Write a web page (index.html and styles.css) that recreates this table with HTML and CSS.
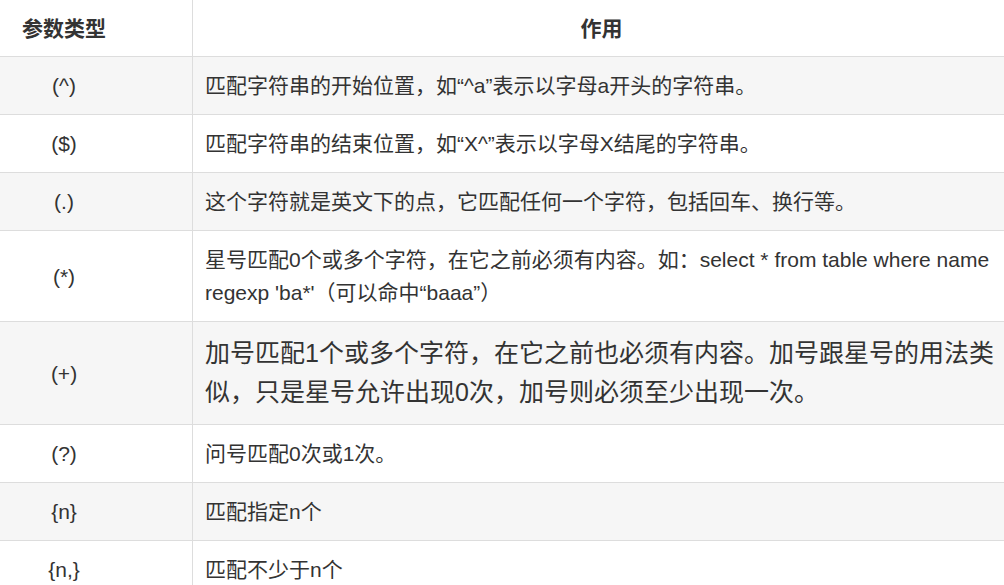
FILE: index.html
```html
<!DOCTYPE html>
<html lang="zh-CN">
<head>
    <meta charset="UTF-8">
    <meta name="viewport" content="width=device-width, initial-scale=1.0">
    <title>正则参数类型</title>
    <link rel="stylesheet" href="styles.css">
</head>
<body>
    <table class="regex-table">
        <thead>
            <tr>
                <th class="type">参数类型</th>
                <th>作用</th>
            </tr>
        </thead>
        <tbody>
            <tr>
                <td class="type">(^)</td>
                <td>匹配字符串的开始位置，如“^a”表示以字母a开头的字符串。</td>
            </tr>
            <tr>
                <td class="type">($)</td>
                <td>匹配字符串的结束位置，如“X^”表示以字母X结尾的字符串。</td>
            </tr>
            <tr>
                <td class="type">(.)</td>
                <td>这个字符就是英文下的点，它匹配任何一个字符，包括回车、换行等。</td>
            </tr>
            <tr>
                <td class="type">(*)</td>
                <td>星号匹配0个或多个字符，在它之前必须有内容。如：select * from table where name regexp 'ba*'（可以命中“baaa”）</td>
            </tr>
            <tr>
                <td class="type">(+)</td>
                <td class="big">加号匹配1个或多个字符，在它之前也必须有内容。加号跟星号的用法类似，只是星号允许出现0次，加号则必须至少出现一次。</td>
            </tr>
            <tr>
                <td class="type">(?)</td>
                <td>问号匹配0次或1次。</td>
            </tr>
            <tr>
                <td class="type">{n}</td>
                <td>匹配指定n个</td>
            </tr>
            <tr>
                <td class="type">{n,}</td>
                <td>匹配不少于n个</td>
            </tr>
        </tbody>
    </table>
</body>
</html>
```

FILE: styles.css
```css
body {
    margin: 0;
    background-color: #fff;
    font-family: "Liberation Sans", "Noto Sans CJK SC", sans-serif;
    color: #333;
}

.regex-table {
    width: 1004px;
    border-collapse: collapse;
    table-layout: fixed;
}

.regex-table th,
.regex-table td {
    border-bottom: 1px solid #ddd;
    border-left: 1px solid #ddd;
    padding: 12px 6px 12px 12px;
    font-size: 21px;
    line-height: 33px;
    text-align: left;
    vertical-align: middle;
}

.regex-table th {
    font-size: 21px;
    font-weight: bold;
    text-align: center;
    padding-top: 12px;
    padding-bottom: 11px;
}

.regex-table .type {
    width: 128px;
    border-left: none;
    padding-left: 0;
    padding-right: 64px;
    text-align: center;
}

.regex-table tbody tr:nth-child(odd) {
    background-color: #f6f6f6;
}

.regex-table td.big {
    font-size: 25px;
    line-height: 39px;
}
```
